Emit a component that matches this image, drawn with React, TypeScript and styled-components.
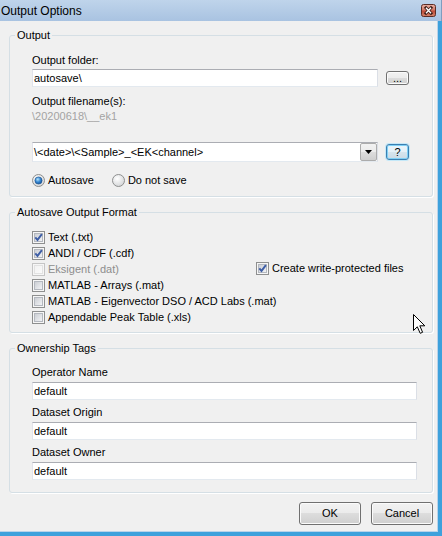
import React, { useId } from 'react';
import styled, { createGlobalStyle } from 'styled-components';

const FRAME = '#3ea1dc';

const GlobalStyle = createGlobalStyle`
  html, body {
    margin: 0;
    padding: 0;
    background: #f0f0f0;
  }
  body {
    font-family: "Liberation Sans", Arial, sans-serif;
    font-size: 11px;
    color: #000;
  }
`;

const cleanId = (id: string) => id.replace(/[^a-zA-Z0-9]/g, '');

const Window = styled.div`
  position: relative;
  width: 442px;
  height: 536px;
  display: flex;
  flex-direction: column;
  overflow: hidden;
`;

const TitleBar = styled.div`
  flex: none;
  height: 21px;
  box-sizing: border-box;
  padding: 0 5px 0 1px;
  display: flex;
  align-items: center;
  justify-content: space-between;
  background: linear-gradient(#bfd4eb, #a9c3e1);
  border-right: 1px solid #7f9dbf;
`;

const TitleText = styled.span`
  font-size: 12px;
  line-height: 14px;
`;

const Body = styled.div`
  flex: 1;
  display: flex;
  flex-direction: column;
  gap: 9px;
  padding: 8px 5px 0 9px;
  background: #f0f0f0;
  border-right: 4px solid ${FRAME};
  border-bottom: 4px solid ${FRAME};
  box-shadow: inset -1px -1px 0 #b9d3ea;
`;

const Group = styled.fieldset<{ $pb: number }>`
  margin: 0;
  min-width: 0;
  padding: 0 5px ${(p) => p.$pb}px 5px;
  border: 1px solid #d5dfe5;
  border-radius: 3px;
  box-shadow: 1px 1px 0 #fff;
`;

const Legend = styled.legend`
  padding: 0 2px;
  line-height: 13px;
`;

const Content = styled.div<{ $pt: number }>`
  padding: ${(p) => p.$pt}px 10px 0 17px;
  display: flex;
  flex-direction: column;
`;

const Caption = styled.div<{ $mt?: number; $muted?: boolean }>`
  line-height: 13px;
  margin-top: ${(p) => p.$mt ?? 0}px;
  color: ${(p) => (p.$muted ? '#a3a3a3' : '#000')};
`;

const FieldRow = styled.div<{ $mt: number }>`
  margin-top: ${(p) => p.$mt}px;
  padding-right: 8px;
  display: grid;
  grid-template-columns: 1fr 23px;
  column-gap: 8px;
  align-items: center;
`;

const TextBox = styled.input<{ $mt?: number }>`
  box-sizing: border-box;
  width: 100%;
  height: 18px;
  margin: ${(p) => p.$mt ?? 0}px 0 0 0;
  padding: 0 1px;
  font: inherit;
  color: #000;
  background: #fff;
  border: 1px solid;
  border-color: #abadb3 #dbdfe6 #e3e9ef #e2e3ea;
  outline: none;
`;

const Combo = styled.div`
  box-sizing: border-box;
  height: 20px;
  display: flex;
  align-items: stretch;
  background: #fff;
  border: 1px solid;
  border-color: #abadb3 #dbdfe6 #e3e9ef #e2e3ea;
`;

const ComboText = styled.div`
  flex: 1;
  padding-left: 1px;
  line-height: 18px;
  white-space: nowrap;
`;

const DropButton = styled.div`
  box-sizing: border-box;
  width: 17px;
  display: flex;
  align-items: center;
  justify-content: center;
  border: 1px solid #acacac;
  border-radius: 2px;
  background: linear-gradient(#f2f2f2 0%, #ebebeb 50%, #dddddd 50%, #cfcfcf 100%);
`;

const PushButton = styled.button<{ $w: number; $h: number; $focus?: boolean }>`
  box-sizing: border-box;
  width: ${(p) => p.$w}px;
  height: ${(p) => p.$h}px;
  margin: 0;
  padding: 0;
  font: inherit;
  line-height: ${(p) => p.$h - 2}px;
  color: #000;
  border: 1px solid ${(p) => (p.$focus ? '#3c7fb1' : '#707070')};
  border-radius: 3px;
  background: ${(p) =>
    p.$focus
      ? 'linear-gradient(#eaf6fd 0%, #e4f0f7 50%, #d6e5ee 50%, #cbdbe6 100%)'
      : 'linear-gradient(#f2f2f2 0%, #ebebeb 50%, #dddddd 50%, #cfcfcf 100%)'};
  box-shadow: ${(p) => (p.$focus ? 'inset 0 0 0 1px #7fd0f5, 0 0 0 1px #c4e8f8' : 'inset 0 0 0 1px #fbfbfb')};
`;

const RadioRow = styled.div<{ $mt: number }>`
  margin-top: ${(p) => p.$mt}px;
  height: 14px;
  display: flex;
  align-items: center;
  gap: 18px;
`;

const Choice = styled.label<{ $disabled?: boolean }>`
  display: flex;
  align-items: center;
  gap: 3px;
  height: 16px;
  white-space: nowrap;
  color: ${(p) => (p.$disabled ? '#8d8d8d' : '#000')};
  svg {
    flex: none;
  }
`;

const CheckColumns = styled.div`
  display: flex;
`;

const CheckList = styled.div`
  width: 224px;
  display: flex;
  flex-direction: column;
`;

const AsideList = styled.div`
  padding-top: 31px;
  display: flex;
  flex-direction: column;
`;

const Footer = styled.div`
  display: flex;
  justify-content: flex-end;
  gap: 10px;
`;

const Cursor = styled.svg`
  position: absolute;
  left: 413px;
  top: 314px;
`;

const CloseGlyph = () => {
  const id = cleanId(useId());
  return (
    <svg width="15" height="13" viewBox="0 0 15 13">
      <defs>
        <linearGradient id={id} x1="0" y1="0" x2="0" y2="1">
          <stop offset="0" stopColor="#e9b2a6" />
          <stop offset="0.45" stopColor="#d27a68" />
          <stop offset="0.55" stopColor="#bf4b38" />
          <stop offset="1" stopColor="#d6866d" />
        </linearGradient>
      </defs>
      <rect x="0.5" y="0.5" width="14" height="12" rx="2" fill={`url(#${id})`} stroke="#5b2c25" />
      <path d="M5 3.8 L10 9.2 M10 3.8 L5 9.2" stroke="#3a1a15" strokeWidth="3" strokeLinecap="square" />
      <path d="M5 3.8 L10 9.2 M10 3.8 L5 9.2" stroke="#fff" strokeWidth="1.4" />
    </svg>
  );
};

const RadioGlyph = ({ checked }: { checked?: boolean }) => {
  const id = cleanId(useId());
  return (
    <svg width="13" height="13" viewBox="0 0 13 13">
      <defs>
        <radialGradient id={`${id}a`} cx="0.4" cy="0.35" r="0.7">
          <stop offset="0" stopColor="#ffffff" />
          <stop offset="1" stopColor="#d2d4d6" />
        </radialGradient>
        <radialGradient id={`${id}b`} cx="0.4" cy="0.35" r="0.7">
          <stop offset="0" stopColor="#b5e5fb" />
          <stop offset="0.5" stopColor="#3a8ad4" />
          <stop offset="1" stopColor="#0f4f98" />
        </radialGradient>
      </defs>
      <circle cx="6.5" cy="6.5" r="6" fill={`url(#${id}a)`} stroke="#8e8f8f" />
      {checked && <circle cx="6.5" cy="6.5" r="3.6" fill={`url(#${id}b)`} stroke="#1b4f89" strokeWidth="0.6" />}
    </svg>
  );
};

const CheckGlyph = ({ checked, disabled }: { checked?: boolean; disabled?: boolean }) => {
  const id = cleanId(useId());
  return (
    <svg width="13" height="13" viewBox="0 0 13 13">
      <defs>
        <linearGradient id={id} x1="0" y1="0" x2="1" y2="1">
          <stop offset="0" stopColor={disabled ? '#f1f1f1' : '#c9ccd2'} />
          <stop offset="1" stopColor={disabled ? '#fbfbfb' : '#f4f5f7'} />
        </linearGradient>
      </defs>
      <rect x="0.5" y="0.5" width="12" height="12" fill="#f6f6f6" stroke={disabled ? '#c5c5c5' : '#8e8f8f'} />
      <rect x="2.5" y="2.5" width="8" height="8" fill={`url(#${id})`} stroke={disabled ? '#e2e2e2' : '#b4b8bf'} />
      {checked && (
        <path d="M3.3 6.3 L5.5 8.9 L9.9 3.2" fill="none" stroke="#3e5ea6" strokeWidth="1.9" />
      )}
    </svg>
  );
};

const Check = ({ label, checked, disabled }: { label: string; checked?: boolean; disabled?: boolean }) => (
  <Choice $disabled={disabled}>
    <CheckGlyph checked={checked} disabled={disabled} />
    {label}
  </Choice>
);

const Radio = ({ label, checked }: { label: string; checked?: boolean }) => (
  <Choice>
    <RadioGlyph checked={checked} />
    {label}
  </Choice>
);

const formats = [
  { label: 'Text (.txt)', checked: true },
  { label: 'ANDI / CDF (.cdf)', checked: true },
  { label: 'Eksigent (.dat)', disabled: true },
  { label: 'MATLAB - Arrays (.mat)' },
  { label: 'MATLAB - Eigenvector DSO / ACD Labs (.mat)' },
  { label: 'Appendable Peak Table (.xls)' },
];

const tags = ['Operator Name', 'Dataset Origin', 'Dataset Owner'];

export default function App() {
  return (
    <Window>
      <GlobalStyle />
      <TitleBar>
        <TitleText>Output Options</TitleText>
        <CloseGlyph />
      </TitleBar>
      <Body>
        <Group $pb={9}>
          <Legend>Output</Legend>
          <Content $pt={12}>
            <Caption>Output folder:</Caption>
            <FieldRow $mt={2}>
              <TextBox readOnly value={'autosave\\'} />
              <PushButton $w={23} $h={14}>...</PushButton>
            </FieldRow>
            <Caption $mt={8}>Output filename(s):</Caption>
            <Caption $mt={2} $muted>
              {'\\20200618\\__ek1'}
            </Caption>
            <FieldRow $mt={19}>
              <Combo>
                <ComboText>{'\\<date>\\<Sample>_<EK<channel>'}</ComboText>
                <DropButton>
                  <svg width="7" height="4" viewBox="0 0 7 4">
                    <path d="M0 0 H7 L3.5 4 Z" fill="#000" />
                  </svg>
                </DropButton>
              </Combo>
              <PushButton $w={23} $h={16} $focus>
                ?
              </PushButton>
            </FieldRow>
            <RadioRow $mt={11}>
              <Radio label="Autosave" checked />
              <Radio label="Do not save" />
            </RadioRow>
          </Content>
        </Group>

        <Group $pb={7}>
          <Legend>Autosave Output Format</Legend>
          <Content $pt={10}>
            <CheckColumns>
              <CheckList>
                {formats.map((f) => (
                  <Check key={f.label} {...f} />
                ))}
              </CheckList>
              <AsideList>
                <Check label="Create write-protected files" checked />
              </AsideList>
            </CheckColumns>
          </Content>
        </Group>

        <Group $pb={12}>
          <Legend>Ownership Tags</Legend>
          <Content $pt={11}>
            {tags.map((t, i) => (
              <React.Fragment key={t}>
                <Caption $mt={i === 0 ? 0 : 6}>{t}</Caption>
                <TextBox $mt={3} readOnly value="default" />
              </React.Fragment>
            ))}
          </Content>
        </Group>

        <Footer>
          <PushButton $w={62} $h={23}>OK</PushButton>
          <PushButton $w={62} $h={23}>Cancel</PushButton>
        </Footer>
      </Body>
      <Cursor width="13" height="20" viewBox="0 0 13 20">
        <path d="M0.5 0.5 V16.5 L4.3 12.8 L7.2 19.3 L9.6 18.3 L6.8 11.8 H11.8 Z" fill="#fff" stroke="#000" />
      </Cursor>
    </Window>
  );
}
